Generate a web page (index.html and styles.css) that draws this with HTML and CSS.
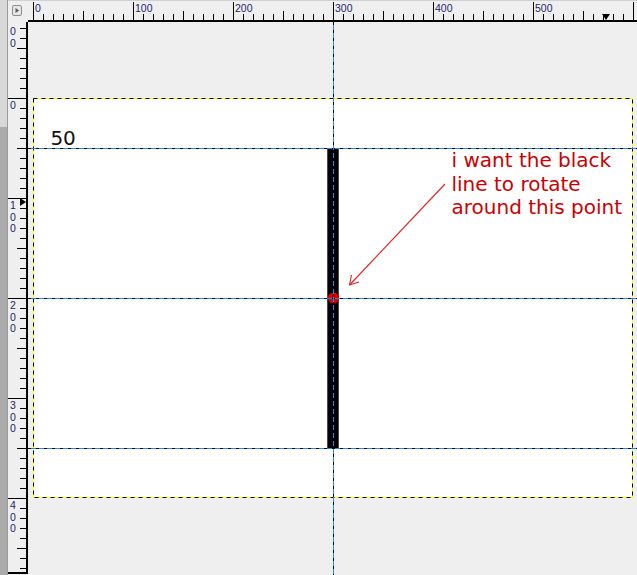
FILE: index.html
```html
<!DOCTYPE html>
<html>
<head>
<meta charset="utf-8">
<link rel="stylesheet" href="styles.css">
</head>
<body>
<div class="window">
  <div class="edge"></div>
  <div class="main">
    <div class="corner">
      <span class="nav-btn">
        <svg width="10" height="11" viewBox="0 0 10 11"><path d="M3.5 3 L7 5.5 L3.5 8 Z" fill="#5a5a5a"/></svg>
      </span>
    </div>
    <div class="hruler">
      <div class="hlabels">
        <span>0</span><span>100</span><span>200</span><span>300</span><span>400</span><span>500</span>
      </div>
      <span class="pointer-h"></span>
    </div>
    <div class="vruler">
      <div class="vlabels">
        <div class="vlabel vlabel-first"><i>0</i><i>0</i></div>
        <div class="vlabel"><i>0</i></div>
        <div class="vlabel"><i>1</i><i>0</i><i>0</i></div>
        <div class="vlabel"><i>2</i><i>0</i><i>0</i></div>
        <div class="vlabel"><i>3</i><i>0</i><i>0</i></div>
        <div class="vlabel"><i>4</i><i>0</i><i>0</i></div>
      </div>
      <span class="pointer-v"></span>
    </div>
    <div class="canvas">
      <svg class="drawing" width="609" height="553" viewBox="0 0 609 553">
        <rect x="5" y="76" width="600" height="400" fill="#fff"/>
        <rect x="5.5" y="76.5" width="599" height="399" fill="none" stroke="#ffff00"/>
        <rect x="5.5" y="76.5" width="599" height="399" fill="none" stroke="#000" stroke-dasharray="4 4"/>
        <rect x="299" y="126" width="12" height="300" fill="#4a4a4a"/>
        <rect x="300" y="126" width="10" height="300" fill="#000"/>
        <circle cx="305.5" cy="276" r="5.5" fill="#e00000"/>
        <g stroke="#e02020" stroke-width="1.1" fill="none">
          <line x1="417" y1="162" x2="322" y2="262.5"/>
          <polyline points="323.5,253 321.5,263 331,260"/>
        </g>
        <g class="guides">
          <line x1="0" y1="126.5" x2="609" y2="126.5" stroke="#1a8cff"/>
          <line x1="0" y1="126.5" x2="609" y2="126.5" stroke="#000" stroke-dasharray="3 5"/>
          <line x1="0" y1="276.5" x2="609" y2="276.5" stroke="#1a8cff"/>
          <line x1="0" y1="276.5" x2="609" y2="276.5" stroke="#000" stroke-dasharray="3 5"/>
          <line x1="0" y1="426.5" x2="609" y2="426.5" stroke="#1a8cff"/>
          <line x1="0" y1="426.5" x2="609" y2="426.5" stroke="#000" stroke-dasharray="3 5"/>
          <line x1="305.5" y1="0" x2="305.5" y2="553" stroke="#1a8cff"/>
          <line x1="305.5" y1="0" x2="305.5" y2="553" stroke="#000" stroke-dasharray="3 5"/>
        </g>
      </svg>
      <div class="text-50">50</div>
      <div class="note">i want the black<br>line to rotate<br>around this point</div>
    </div>
  </div>
</div>
</body>
</html>
```

FILE: styles.css
```css
html, body {
  margin: 0;
  padding: 0;
  background: #efefef;
}

.window {
  display: flex;
  width: 637px;
  height: 575px;
  overflow: hidden;
  font-family: "Liberation Sans", Arial, sans-serif;
}

.edge {
  flex: none;
  width: 7px;
  border-right: 1px solid #9a9a9a;
  background: linear-gradient(#d8d8d8 0 127px, #ababab 127px);
}

.main {
  flex: 1;
  display: grid;
  grid-template-columns: 20px 1fr;
  grid-template-rows: 22px 1fr;
  min-width: 0;
}

.corner {
  background: #efefef;
  box-shadow: inset 0 1px #cdd1d6;
  padding: 5px 0 0 4px;
  box-sizing: border-box;
}

.nav-btn {
  display: block;
  width: 10px;
  height: 11px;
  box-sizing: border-box;
  border: 1px solid #8e8e8e;
  border-radius: 2px;
  background: #e6e6e6;
  position: relative;
}

.nav-btn svg {
  position: absolute;
  left: -1px;
  top: -1px;
}

.hruler {
  position: relative;
  overflow: hidden;
  background-color: #efefef;
  border-bottom: 2px solid #000;
  box-shadow: inset 0 1px #cdd1d6;
  background-image:
    linear-gradient(to right, #000 1px, transparent 1px),
    linear-gradient(to right, #000 1px, transparent 1px),
    linear-gradient(to right, #000 1px, transparent 1px);
  background-size: 100px 18px, 100px 9px, 10px 6px;
  background-position: 5px 100%, 55px 100%, 5px 100%;
  background-repeat: repeat-x;
}

.hlabels {
  display: flex;
  padding-left: 5px;
}

.hlabels span {
  flex: none;
  width: 100px;
  box-sizing: border-box;
  padding: 3px 0 0 2px;
  font-size: 10.5px;
  line-height: 11px;
  color: #24246a;
}

.pointer-h {
  position: absolute;
  left: 574px;
  top: 14px;
  width: 0;
  height: 0;
  border-left: 4px solid transparent;
  border-right: 4px solid transparent;
  border-top: 6px solid #000;
}

.vruler {
  position: relative;
  overflow: hidden;
  background-color: #efefef;
  border-right: 2px solid #000;
  border-bottom: 2px solid #000;
  margin-bottom: 1px;
  background-image:
    linear-gradient(to bottom, #000 1px, transparent 1px),
    linear-gradient(to bottom, #000 1px, transparent 1px),
    linear-gradient(to bottom, #000 1px, transparent 1px);
  background-size: 18px 100px, 9px 100px, 6px 10px;
  background-position: 100% 76px, 100% 26px, 100% 6px;
  background-repeat: repeat-y;
}

.vlabels {
  display: flex;
  flex-direction: column;
}

.vlabel {
  flex: none;
  height: 100px;
  box-sizing: border-box;
  padding: 2px 0 0 2px;
  display: flex;
  flex-direction: column;
}

.vlabel-first {
  height: 76px;
  padding-top: 4px;
}

.vlabel i {
  font-style: normal;
  font-size: 10.5px;
  line-height: 11.5px;
  color: #24246a;
}

.pointer-v {
  position: absolute;
  left: 12px;
  top: 176px;
  width: 0;
  height: 0;
  border-top: 4px solid transparent;
  border-bottom: 4px solid transparent;
  border-left: 6px solid #000;
}

.canvas {
  position: relative;
  overflow: hidden;
  background: #efefef;
}

.drawing {
  display: block;
}

.text-50 {
  position: absolute;
  left: 22.4px;
  top: 104.6px;
  font-family: "DejaVu Sans", sans-serif;
  font-size: 20px;
  line-height: 23px;
  color: #111;
}

.note {
  position: absolute;
  left: 423.5px;
  top: 127.3px;
  font-family: "DejaVu Sans", sans-serif;
  font-size: 20px;
  line-height: 23.5px;
  color: #cc0000;
  white-space: nowrap;
}
```
